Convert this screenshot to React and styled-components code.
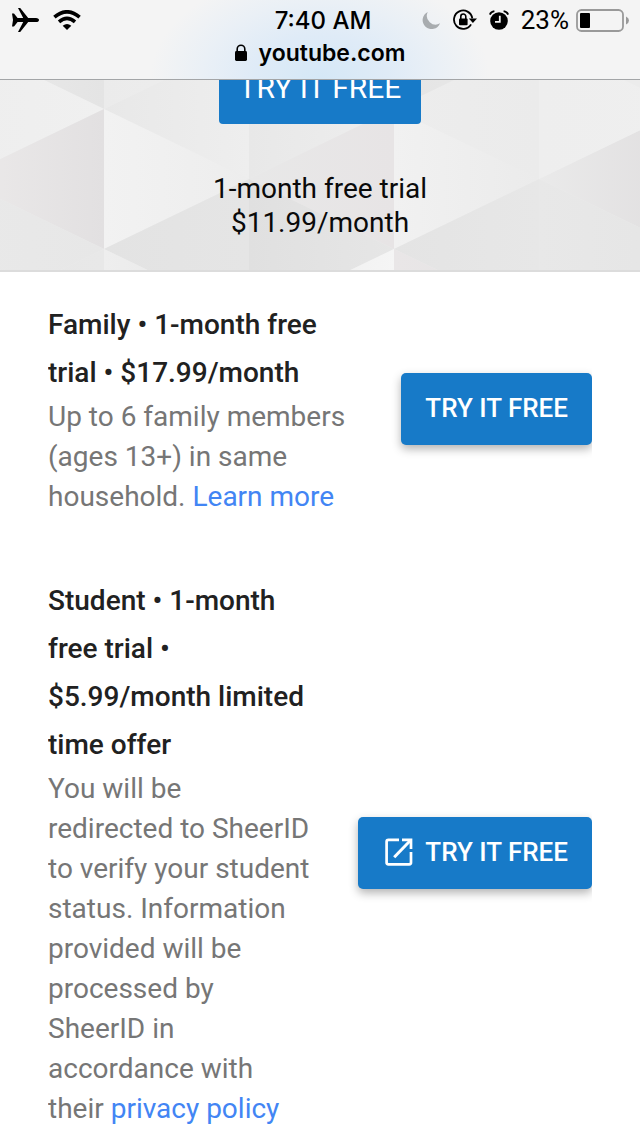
import React from "react";
import styled, { createGlobalStyle, css } from "styled-components";

const GlobalStyle = createGlobalStyle`
  *, *::before, *::after {
    box-sizing: border-box;
  }

  body {
    margin: 0;
    background: #fff;
    font-family: Roboto, "Liberation Sans", sans-serif;
  }
`;

const Page = styled.div`
  min-height: 100vh;
  overflow: hidden;
`;

const BrowserBar = styled.header`
  position: sticky;
  top: 0;
  z-index: 2;
  height: 80px;
  border-bottom: 1px solid #a3a5a7;
  background: radial-gradient(
      ellipse 170px 110px at 50% 100%,
      #d5e8f7 0%,
      #dfebf7 40%,
      #eaf0f6 70%,
      rgba(244, 244, 244, 0) 100%
    ),
    #f4f4f4;
  color: #000;
  font-family: Inter, Roboto, sans-serif;
`;

const StatusBar = styled.div`
  display: grid;
  grid-template-columns: 1fr auto 1fr;
  align-items: center;
  height: 40px;
  padding: 0 11px;
`;

const StatusGroup = styled.div`
  display: flex;
  align-items: center;
  gap: ${({ $gap }) => $gap}px;
  justify-content: ${({ $end }) => ($end ? "flex-end" : "flex-start")};

  svg {
    display: block;
  }
`;

const Time = styled.time`
  padding-left: 6px;
  font-size: 24px;
  font-weight: 500;
`;

const BatteryLevel = styled.span`
  display: flex;
  align-items: center;
  gap: 7px;
  font-family: Roboto, sans-serif;
  font-size: 26px;
`;

const Address = styled.div`
  display: flex;
  align-items: center;
  justify-content: center;
  gap: 12px;
  height: 25px;
  font-size: 23px;
  font-weight: 600;
`;

const Hero = styled.section`
  position: relative;
  display: flex;
  flex-direction: column;
  align-items: center;
  gap: 48px;
  margin-top: -28px;
  padding-bottom: 30px;
  border-bottom: 2px solid #dcdcdc;
  background: #ececec;
`;

const Pattern = styled.svg`
  position: absolute;
  inset: 0;
  width: 100%;
  height: 100%;
`;

const HeroText = styled.p`
  position: relative;
  margin: 0;
  font-size: 28px;
  line-height: 34px;
  text-align: center;
  color: #0a0a0a;
`;

const Button = styled.button`
  display: flex;
  flex: none;
  align-items: center;
  gap: 12px;
  height: 72px;
  padding: 0 24px 2px;
  border: 0;
  border-radius: 5px;
  background: #177ac8;
  box-shadow: 0 4px 10px rgba(0, 0, 0, 0.3);
  color: #fff;
  font-family: inherit;
  font-size: 26px;
  font-weight: 500;
  white-space: nowrap;
  cursor: pointer;

  ${({ $withIcon }) =>
    $withIcon &&
    css`
      padding-left: 27px;
    `}

  ${({ $hero }) =>
    $hero &&
    css`
      position: relative;
      padding: 0 20px 2px;
      border-radius: 4px;
      box-shadow: none;
      font-size: 30px;
      font-weight: 400;
    `}
`;

const Plans = styled.main`
  display: flex;
  flex-direction: column;
  gap: 60px;
  padding: 29px 48px 0;
`;

const Plan = styled.article`
  display: flex;
  align-items: center;
  justify-content: space-between;
  gap: 48px;
  clip-path: inset(-20px 0);
`;

const PlanTitle = styled.h2`
  margin: 0;
  font-size: 28px;
  font-weight: 500;
  line-height: 48px;
  color: #212121;
`;

const PlanText = styled.p`
  margin: 0;
  font-size: 28px;
  line-height: 40px;
  color: #767676;
`;

const Link = styled.a`
  color: #4285f4;
  text-decoration: none;
`;

const PlaneIcon = () => (
  <svg width="28" height="26" viewBox="0 0 28 26" aria-hidden="true">
    <path d="M1 6.5h2l3.6 4.4h5.6L7 1h2.2l8 9.9H25q3 .2 3 2.1t-3 2.1h-7.8l-8 9.9H7l5.2-9.9H6.6L3 19.5H1L2 13z" />
  </svg>
);

const WifiIcon = () => (
  <svg width="28" height="20" viewBox="0 0 28 20" aria-hidden="true">
    <g fill="none" stroke="#000" strokeWidth="3.6">
      <path d="M1.4 7.2Q14-3.6 26.6 7.2" />
      <path d="M6 11.9Q14 5 22 11.9" />
    </g>
    <path d="M14 20l-4.3-4.3q4.3-3.6 8.6 0z" />
  </svg>
);

const MoonIcon = () => (
  <svg width="19" height="19" viewBox="0 0 20 20" aria-hidden="true">
    <path d="M6 1A9.5 9.5 0 1 0 19 13A9.3 9.3 0 0 1 6 1z" fill="#a8acaf" />
  </svg>
);

const RotationLockIcon = () => (
  <svg width="24" height="22" viewBox="0 0 24 22" aria-hidden="true">
    <path
      d="M18.1 15.4A9.2 9.2 0 1 1 19.3 9.4"
      fill="none"
      stroke="#000"
      strokeWidth="1.8"
    />
    <path d="M15.8 9.4H24l-4.1 4.6z" />
    <rect x="6" y="9.5" width="8.6" height="6.8" rx="1" />
    <path d="M7.8 10V7.5a2.5 2.5 0 0 1 5 0V10" fill="none" stroke="#000" strokeWidth="1.6" />
  </svg>
);

const AlarmIcon = () => (
  <svg width="20" height="20" viewBox="0 0 20 20" aria-hidden="true">
    <circle cx="10" cy="11" r="8.8" />
    <path
      d="M.8 4.6Q2 1.6 5.4 1.2M19.2 4.6Q18 1.6 14.6 1.2"
      fill="none"
      stroke="#000"
      strokeWidth="1.8"
    />
    <path d="M10.8 5.8v6H6" fill="none" stroke="#f4f4f4" strokeWidth="1.8" />
  </svg>
);

const BatteryIcon = () => (
  <svg width="53" height="23" viewBox="0 0 53 23" aria-hidden="true">
    <rect x="1" y="1" width="46" height="21" rx="4.5" fill="none" stroke="#999" strokeWidth="1.8" />
    <rect x="4" y="4" width="10" height="15" rx="1" />
    <path d="M50 7.5q3 1.5 3 4t-3 4z" fill="#999" />
  </svg>
);

const LockIcon = () => (
  <svg width="12" height="17" viewBox="0 0 12 17" aria-hidden="true">
    <rect y="7" width="12" height="10" rx="1.4" />
    <path d="M2.2 8V5a3.8 3.8 0 0 1 7.6 0v3" fill="none" stroke="#000" strokeWidth="1.6" />
  </svg>
);

const OpenInNewIcon = () => (
  <svg width="28" height="28" viewBox="0 0 28 28" aria-hidden="true">
    <g fill="none" stroke="#fff" strokeWidth="2.7">
      <path d="M14 1.9H3.4Q1.6 1.9 1.6 3.7V24.5Q1.6 26.3 3.4 26.3H24.2Q26 26.3 26 24.5V14" />
      <path d="M17 1.9H26V11" />
      <path d="M25.6 2.3L9.2 19.2" strokeWidth="3" />
    </g>
  </svg>
);

const facets = [
  { points: "104,57 249,-13 249,127", from: "#e8e8e8", to: "#eeeeee" },
  { points: "-41,-13 104,-13 104,57", from: "#ebebeb", to: "#e4e4e4" },
  { points: "-41,-13 104,57 -41,127", from: "#eeeeee", to: "#f0f0f0" },
  { points: "-41,127 104,57 104,197", from: "#eceaea", to: "#e2e0e1" },
  { points: "104,57 104,197 249,127", from: "#f2f2f2", to: "#ededed" },
  { points: "104,197 249,127 249,267", from: "#e3e3e3", to: "#e5e5e5" },
  { points: "104,-13 249,-13 104,57", from: "#ebebeb", to: "#eeeeee" },
  { points: "249,-13 394,57 249,127", from: "#e8e8e8", to: "#eeeeee" },
  { points: "249,127 394,57 394,197", from: "#e8e8e8", to: "#e7e4e5" },
  { points: "249,127 394,197 249,267", from: "#e0e0e0", to: "#e6e6e6" },
  { points: "394,57 539,127 394,197", from: "#f1f1f1", to: "#ebebeb" },
  { points: "394,57 539,-13 539,127", from: "#ededed", to: "#ebebeb" },
  { points: "394,-13 539,-13 394,57", from: "#e4e4e4", to: "#eaeaea" },
  { points: "394,197 539,127 539,267", from: "#e4e4e4", to: "#e7e7e7" },
  { points: "539,127 684,57 684,197", from: "#eaeaea", to: "#e0dedf" },
  { points: "539,-13 684,57 539,127", from: "#eeeeee", to: "#efefef" },
  { points: "539,127 684,197 539,267", from: "#e8e8e8", to: "#e5e5e5" },
  { points: "684,197 684,267 539,267", from: "#e5e5e5", to: "#e3e3e3" },
  { points: "-41,127 104,197 -41,267", from: "#e9e9e9", to: "#e7e7e7" },
  { points: "104,197 -41,267 104,267", from: "#e6e6e6", to: "#e8e8e8" },
  { points: "104,197 249,267 104,267", from: "#eeeeee", to: "#e6e6e6" },
  { points: "394,197 249,267 394,267", from: "#ebebeb", to: "#f5f5f5" },
  { points: "394,197 539,267 394,267", from: "#e9e6e7", to: "#e4e4e4" },
];

const TrianglePattern = () => (
  <Pattern viewBox="0 0 640 218" preserveAspectRatio="xMidYMax slice" aria-hidden="true">
    <defs>
      {facets.map((facet, i) => (
        <linearGradient key={facet.points} id={`facet-${i}`}>
          <stop offset="0" stopColor={facet.from} />
          <stop offset="1" stopColor={facet.to} />
        </linearGradient>
      ))}
    </defs>
    {facets.map((facet, i) => (
      <polygon key={facet.points} points={facet.points} fill={`url(#facet-${i})`} />
    ))}
  </Pattern>
);

const App = () => {
  return (
    <>
      <GlobalStyle />
      <Page>
        <BrowserBar>
          <StatusBar>
            <StatusGroup $gap={14}>
              <PlaneIcon />
              <WifiIcon />
            </StatusGroup>
            <Time>7:40 AM</Time>
            <StatusGroup $gap={12} $end>
              <MoonIcon />
              <RotationLockIcon />
              <AlarmIcon />
              <BatteryLevel>
                23%
                <BatteryIcon />
              </BatteryLevel>
            </StatusGroup>
          </StatusBar>
          <Address>
            <LockIcon />
            youtube.com
          </Address>
        </BrowserBar>

        <Hero>
          <TrianglePattern />
          <Button $hero type="button">
            TRY IT FREE
          </Button>
          <HeroText>
            1-month free trial
            <br />
            $11.99/month
          </HeroText>
        </Hero>

        <Plans>
          <Plan>
            <div>
              <PlanTitle>Family • 1-month free trial • $17.99/month</PlanTitle>
              <PlanText>
                Up to 6 family members (ages 13+) in same household.{" "}
                <Link href="#learn-more">Learn more</Link>
              </PlanText>
            </div>
            <Button type="button">TRY IT FREE</Button>
          </Plan>
          <Plan>
            <div>
              <PlanTitle>
                Student • 1-month free trial • $5.99/month limited time offer
              </PlanTitle>
              <PlanText>
                You will be redirected to SheerID to verify your student status.
                Information provided will be processed by SheerID in accordance
                with their <Link href="#privacy">privacy policy</Link>
              </PlanText>
            </div>
            <Button $withIcon type="button">
              <OpenInNewIcon />
              TRY IT FREE
            </Button>
          </Plan>
        </Plans>
      </Page>
    </>
  );
};

export default App;
